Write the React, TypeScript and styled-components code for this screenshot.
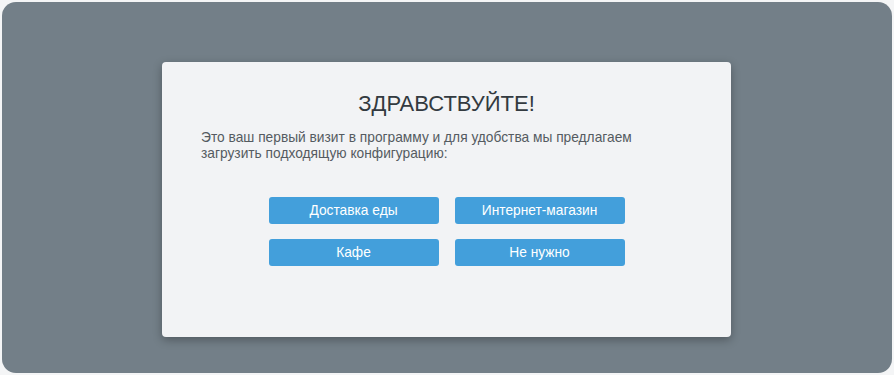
import styled, { createGlobalStyle } from "styled-components";

const GlobalStyle = createGlobalStyle`
    html, body {
        margin: 0;
        padding: 0;
        background: #f4f5f6;
    }
    body {
        font-family: "Liberation Sans", Arial, sans-serif;
    }
`;

const Screen = styled.div`
    margin: 2px;
    height: 371px;
    box-sizing: border-box;
    padding: 60px 161px 0 160px;
    background-color: #737f88;
    border-radius: 14px;
    display: flex;
    align-items: flex-start;
`;

const Dialog = styled.div`
    width: 569px;
    height: 275px;
    box-sizing: border-box;
    padding: 29px 39px 0;
    background-color: #f2f3f5;
    border-radius: 4px;
    box-shadow: 0 3px 10px rgb(0 0 0 / 30%);
    display: flex;
    flex-direction: column;
`;

const Title = styled.h1`
    margin: 0;
    font-size: 22px;
    font-weight: normal;
    line-height: 26px;
    text-align: center;
    color: #333a40;
`;

const Intro = styled.p`
    margin: 13px 0 0;
    font-size: 13.75px;
    line-height: 16px;
    color: #555b61;
`;

const Choices = styled.div`
    margin-top: 35px;
    align-self: center;
    display: grid;
    grid-template-columns: 170px 170px;
    column-gap: 16px;
    row-gap: 15px;
`;

const ChoiceButton = styled.button`
    height: 27px;
    padding: 0;
    border: none;
    border-radius: 3px;
    background-color: #439fdb;
    color: #fff;
    font-family: "Liberation Sans", Arial, sans-serif;
    font-size: 13.75px;
    cursor: pointer;
    :hover {
        background-color: #3a92cc;
    }
`;

const options = ["Доставка еды", "Интернет-магазин", "Кафе", "Не нужно"];

const App = () => {
    return (
        <>
            <GlobalStyle />
            <Screen>
                <Dialog>
                    <Title>ЗДРАВСТВУЙТЕ!</Title>
                    <Intro>
                        Это ваш первый визит в программу и для удобства мы предлагаем
                        загрузить подходящую конфигурацию:
                    </Intro>
                    <Choices>
                        {options.map((o) => (
                            <ChoiceButton key={o}>{o}</ChoiceButton>
                        ))}
                    </Choices>
                </Dialog>
            </Screen>
        </>
    );
};

export default App;
